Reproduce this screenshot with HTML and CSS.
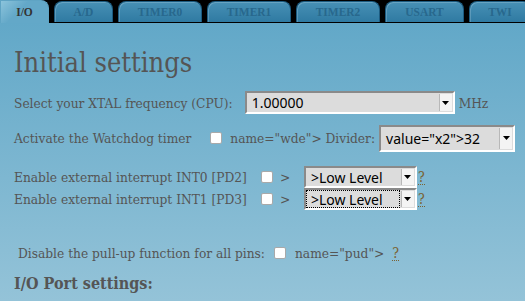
FILE: index.html
```html
<!DOCTYPE html>
<html lang="en">
<head>
    <meta charset="UTF-8">
    <title>AVR wizard</title>
    <link rel="stylesheet" href="styles.css">
</head>
<body>
    <ul class="tabs">
        <li class="tab tab-io active">I/O</li>
        <li class="tab tab-ad">A/D</li>
        <li class="tab tab-timer">TIMER0</li>
        <li class="tab tab-timer">TIMER1</li>
        <li class="tab tab-timer">TIMER2</li>
        <li class="tab tab-usart">USART</li>
        <li class="tab tab-twi">TWI</li>
    </ul>

    <div class="panel">
        <h1 class="title">Initial settings</h1>

        <div class="row row-xtal">
            <span class="label">Select your XTAL frequency (CPU):</span>
            <span class="select select-xtal">
                <span class="select-text">1.00000</span>
                <span class="select-btn"><svg width="7" height="4" viewBox="0 0 7 4"><path d="M0 0H7L3.5 4Z" fill="#000"/></svg></span>
            </span>
            <span class="unit">MHz</span>
        </div>

        <div class="row row-wdt">
            <span class="label">Activate the Watchdog timer</span>
            <input type="checkbox" class="check">
            <span class="label">name="wde"&gt; Divider:</span>
            <span class="select select-div">
                <span class="select-text">value="x2"&gt;32</span>
                <span class="select-btn"><svg width="7" height="4" viewBox="0 0 7 4"><path d="M0 0H7L3.5 4Z" fill="#000"/></svg></span>
            </span>
        </div>

        <div class="row row-int first">
            <span class="label">Enable external interrupt INT0 [PD2]</span>
            <input type="checkbox" class="check">
            <span class="label gt">&gt;</span>
            <span class="select select-int">
                <span class="select-text">&gt;Low Level</span>
                <span class="select-btn"><svg width="7" height="4" viewBox="0 0 7 4"><path d="M0 0H7L3.5 4Z" fill="#000"/></svg></span>
            </span>
            <abbr class="help">?</abbr>
        </div>

        <div class="row row-int">
            <span class="label">Enable external interrupt INT1 [PD3]</span>
            <input type="checkbox" class="check">
            <span class="label gt">&gt;</span>
            <span class="select select-int focus">
                <span class="select-text">&gt;Low Level</span>
                <span class="select-btn"><svg width="7" height="4" viewBox="0 0 7 4"><path d="M0 0H7L3.5 4Z" fill="#000"/></svg></span>
            </span>
            <abbr class="help">?</abbr>
        </div>

        <div class="row row-pud">
            <span class="label">Disable the pull-up function for all pins:</span>
            <input type="checkbox" class="check">
            <span class="label">name="pud"&gt;</span>
            <abbr class="help">?</abbr>
        </div>

        <h3 class="subtitle">I/O Port settings:</h3>
    </div>
</body>
</html>
```

FILE: styles.css
```css
*{
    margin: 0;
    padding: 0;
}

body{
    background: #000;
    font-family: "DejaVu Serif Condensed", "DejaVu Serif", serif;
    font-stretch: condensed;
    color: #555;
    width: 525px;
    height: 301px;
    overflow: hidden;
}

.tabs{
    list-style: none;
    display: flex;
    gap: 5px;
    height: 23px;
}

.tab{
    height: 21px;
    margin-top: 1px;
    border: 1px solid #1c5b80;
    border-bottom: none;
    border-radius: 8px 8px 0 0;
    background: linear-gradient(#4790b5, #2f7aa2);
    box-shadow: inset 1px 1px 0 rgba(255,255,255,0.18);
    font-family: "Liberation Serif", serif;
    font-stretch: normal;
    font-weight: bold;
    font-size: 11.5px;
    line-height: 21px;
    text-align: center;
    color: #28688d;
    box-sizing: border-box;
    flex: none;
}

.tab.active{
    height: 23px;
    margin-top: 0;
    border-color: #5fa4c4;
    border-radius: 0 8px 0 0;
    background: linear-gradient(135deg, #8cc4dc, #63a8c8 40%);
    color: #333;
    line-height: 23px;
    box-shadow: none;
}

.tab-io{ width: 49px; }
.tab-ad{ width: 59px; }
.tab-timer{ width: 84px; }
.tab-usart{ width: 79px; }
.tab-twi{ width: 62px; }

.panel{
    height: 278px;
    background: linear-gradient(#62a8c8, #94c3d8);
    padding: 0 14px;
}

.title{
    font-weight: normal;
    font-size: 27px;
    line-height: 28px;
    padding-top: 26px;
}

.row{
    display: flex;
    align-items: center;
    font-size: 13.6px;
}

.label{
    white-space: nowrap;
}

.row-xtal{
    margin-top: 14px;
    height: 23px;
}

.row-xtal .select{
    margin-left: 12px;
}

.unit{
    margin-left: 4px;
}

.row-wdt{
    margin-top: 11px;
    height: 26px;
}

.row-wdt .check{
    margin: 0 8px 0 19px;
}

.row-wdt .select{
    margin-left: 4px;
}

.row-int{
    height: 22px;
}

.row-int.first{
    margin-top: 15px;
}

.row-int .check{
    margin: 0 7px 0 14px;
}

.gt{
    width: 24px;
}

.row-pud{
    margin-top: 32px;
    height: 22px;
    padding-left: 4px;
}

.row-pud .check{
    margin: 0 9px 0 9px;
}

.row-pud .help{
    margin-left: 8px;
}

.check{
    appearance: none;
    width: 12px;
    height: 12px;
    background: #fff;
    border: 1px solid #a9a9a9;
    border-radius: 2px;
    box-sizing: border-box;
    flex: none;
}

.select{
    display: flex;
    align-items: center;
    box-sizing: border-box;
    border: 2px solid;
    border-color: #8a8a8a #fff #fff #8a8a8a;
    background: #dcdcdc;
    font-family: "Noto Sans", sans-serif;
    font-stretch: normal;
    font-size: 14px;
    color: #000;
    flex: none;
}

.select-text{
    flex: 1;
    padding-left: 5px;
    white-space: nowrap;
}

.select-btn{
    width: 12px;
    align-self: stretch;
    margin: 1px 1px 1px 0;
    background: #f4f4f4;
    border-left: 1px solid #b8b8b8;
    display: flex;
    align-items: center;
    justify-content: center;
}

.select-xtal{
    width: 210px;
    height: 23px;
}

.select-div{
    width: 136px;
    height: 27px;
}

.select-int{
    width: 113px;
    height: 22px;
}

.select-int.focus .select-text{
    outline: 1px dotted #000;
    outline-offset: -1px;
    align-self: stretch;
    display: flex;
    align-items: center;
    margin-right: 1px;
}

.help{
    color: #7a6232;
    border-bottom: 1px dotted #7a6232;
    text-decoration: none;
    line-height: 14px;
    font-size: 14px;
    margin-left: 1px;
}

.subtitle{
    font-size: 16px;
    margin-top: 10px;
}
```
